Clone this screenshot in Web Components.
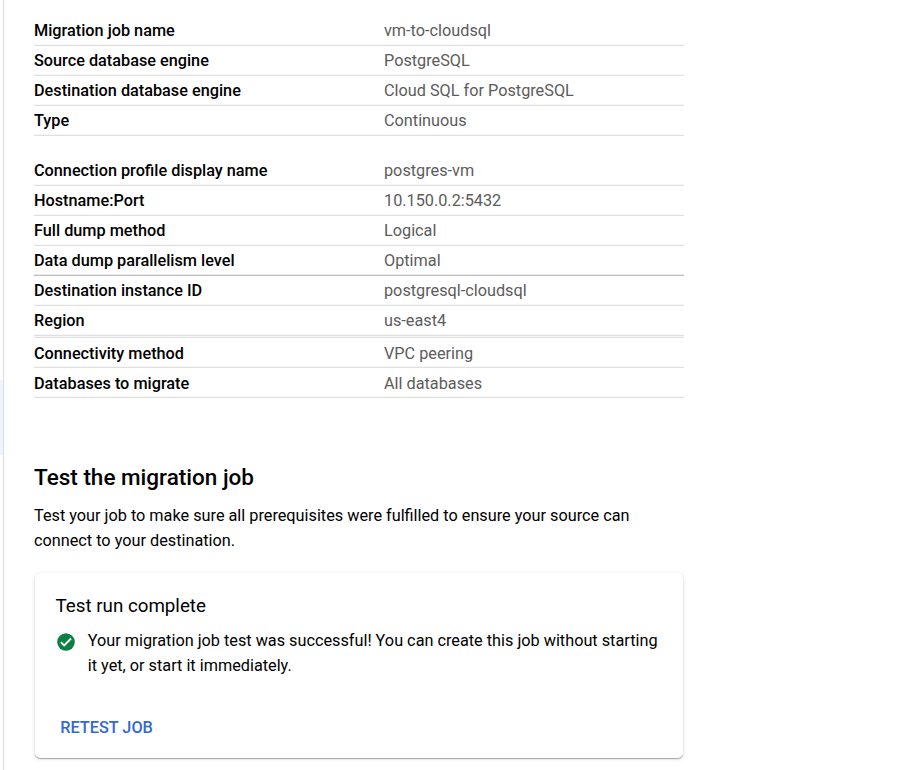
<!DOCTYPE html>
<html lang="en"><head><meta charset="utf-8"><title>Migration job</title>
<style>body{margin:0;background:#fff;color:#000;font-family:Roboto,"Liberation Sans",sans-serif;font-size:16.25px;line-height:25px}</style></head>
<body>
<migration-page>
<detail-group>
<detail-row label="Migration job name">vm-to-cloudsql</detail-row>
<detail-row label="Source database engine">PostgreSQL</detail-row>
<detail-row label="Destination database engine">Cloud SQL for PostgreSQL</detail-row>
<detail-row label="Type">Continuous</detail-row>
</detail-group>
<detail-group>
<detail-row label="Connection profile display name">postgres-vm</detail-row>
<detail-row label="Hostname:Port">10.150.0.2:5432</detail-row>
<detail-row label="Full dump method">Logical</detail-row>
<detail-row label="Data dump parallelism level" class="strong">Optimal</detail-row>
<detail-row label="Destination instance ID">postgresql-cloudsql</detail-row>
<detail-row label="Region" class="double">us-east4</detail-row>
<detail-row label="Connectivity method" class="low">VPC peering</detail-row>
<detail-row label="Databases to migrate" class="low">All databases</detail-row>
</detail-group>
<test-section heading="Test the migration job">
Test your job to make sure all prerequisites were fulfilled to ensure your source can connect to your destination.
<result-card slot="result" heading="Test run complete">Your migration job test was successful! You can create this job without starting it yet, or start it immediately.<text-button slot="action">RETEST JOB</text-button></result-card>
</test-section>
</migration-page>
<script>
const define = (name, html) => customElements.define(name, class extends HTMLElement {
  constructor() {
    super();
    const t = document.createElement('template');
    t.innerHTML = html;
    this.attachShadow({mode: 'open'}).append(t.content.cloneNode(true));
  }
  connectedCallback() {
    for (const attr of ['label', 'heading']) {
      const el = this.shadowRoot.querySelector('.' + attr);
      if (el) el.textContent = this.getAttribute(attr);
    }
  }
});
define('migration-page', `<style>
:host{display:grid;grid-template-columns:3px 650px;column-gap:31px;height:770px;overflow:hidden}
aside{display:grid;grid-template-rows:380px 75px;width:3px;height:770px;border-right:1px solid #dadce0}
aside i{grid-row:2;background:#eff5ff}
main{padding-top:16px}
</style><aside><i></i></aside><main><slot></slot></main>`);
define('detail-group', `<style>
:host{display:block;margin-bottom:20px}
</style><slot></slot>`);
define('detail-row', `<style>
:host{display:grid;grid-template-columns:350px 1fr;box-sizing:border-box;height:30px;padding-top:1px;line-height:28px;border-bottom:1px solid #e0e0e0;box-shadow:inset 0 -1px #f7f7f7}
:host(.strong){border-bottom-color:#bdbdbd;box-shadow:inset 0 -1px #e9e9e9}
:host(.double){height:32px;background:linear-gradient(#f7f7f7 1px,#e0e0e0 1px) 0 28px/100% 2px no-repeat}
:host(.low){padding-top:2px}
.label{font-weight:500}
.value{color:#5c5c5c}
</style><span class="label"></span><span class="value"><slot></slot></span>`);
define('test-section', `<style>
:host{display:block;padding-top:41px}
h2{margin:0 0 8px;font-size:22.5px;font-weight:500;line-height:36px}
p{margin:0 0 20px}
</style><h2 class="heading"></h2><p><slot></slot></p><slot name="result"></slot>`);
define('result-card', `<style>
:host{display:block;box-sizing:border-box;width:648px;height:185px;margin-left:1px;padding:21px 21px 0 20.5px;border-radius:5px;background:#fff;box-shadow:0 1px 1px rgba(0,0,0,.3),0 1px 4px rgba(0,0,0,.13)}
h3{margin:0 0 9px;font-size:18.75px;font-weight:400;line-height:25px}
.msg{display:grid;grid-template-columns:20px 1fr;column-gap:12.25px}
svg{width:20px;height:20px;margin-top:4px}
.actions{margin-top:37px}
</style><h3 class="heading"></h3><div class="msg"><svg viewBox="0 0 20 20"><circle cx="10" cy="10" r="8.8" fill="#0b8043"/><path d="M4.9 10.2l3.3 3.3 6.8-7" fill="none" stroke="#fff" stroke-width="1.9"/></svg><div><slot></slot></div></div><div class="actions"><slot name="action"></slot></div>`);
define('text-button', `<style>
:host{display:inline-block;padding-left:4.8px}
button{all:unset;color:#3367d6;font-weight:500;cursor:pointer}
</style><button><slot></slot></button>`);
</script>
</body></html>
